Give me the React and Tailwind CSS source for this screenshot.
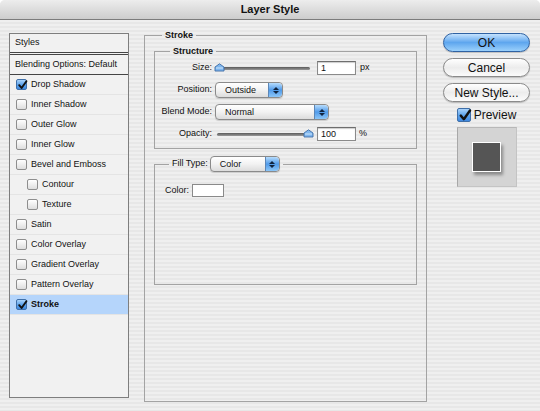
import React from "react";

const stripes =
  "bg-[repeating-linear-gradient(180deg,#efefef_0px,#efefef_2px,#e7e7e7_2px,#e7e7e7_4px)]";

const CheckMark = ({ size = 11 }) => (
  <svg width={size} height={size} viewBox="0 0 11 11" className="absolute inset-0">
    <path d="M2.2 5.2 L4.6 8 L9.4 1.2" fill="none" stroke="#111" strokeWidth="1.9" strokeLinecap="round" strokeLinejoin="round" />
  </svg>
);

const Check = ({ checked, big }) => (
  <span
    className={`relative inline-block shrink-0 rounded-[2px] border ${
      big ? "w-[14px] h-[14px]" : "w-[11px] h-[11px]"
    } ${
      checked
        ? "border-[#3f6fa8] bg-gradient-to-b from-[#a9d3fb] via-[#5fa5ec] to-[#3f88df]"
        : "border-[#8e8e8e] bg-gradient-to-b from-[#ffffff] to-[#dedede]"
    }`}
  >
    {checked && <CheckMark size={big ? 14 : 11} />}
  </span>
);

const Thumb = () => (
  <svg width="11" height="9" viewBox="0 0 11 9">
    <path d="M1 4 L5.5 0.8 L10 4 L10 8 L1 8 Z" fill="#7fb6ee" stroke="#3f6ea6" strokeWidth="0.9" />
    <path d="M2 5 L9 5" stroke="#cfe6fb" strokeWidth="1" />
  </svg>
);

const Slider = ({ at }) => (
  <div className="relative w-[95px] h-[10px] flex items-center">
    <div className="w-full h-[3px] rounded-full bg-gradient-to-b from-[#5a5a5a] to-[#9a9a9a]" />
    <div className={`absolute top-[0px] ${at === "left" ? "left-[-1px]" : "right-[-2px]"}`}>
      <Thumb />
    </div>
  </div>
);

const Stepper = () => (
  <div className="w-[14px] h-full rounded-r-[4px] bg-gradient-to-b from-[#b6dcfc] via-[#4f9ae9] to-[#8cc6f7] border-l border-[#5b86b7] flex flex-col items-center justify-center gap-[1px]">
    <svg width="6" height="3" viewBox="0 0 6 3"><path d="M0 3 L3 0 L6 3 Z" fill="#10243f" /></svg>
    <svg width="6" height="3" viewBox="0 0 6 3"><path d="M0 0 L3 3 L6 0 Z" fill="#10243f" /></svg>
  </div>
);

const Select = ({ value, w }) => (
  <div
    className={`${w} h-[16px] flex items-stretch rounded-[4px] border border-[#8a8a8a] bg-gradient-to-b from-[#ffffff] via-[#f2f2f2] to-[#dcdcdc] shadow-[0_1px_1px_rgba(0,0,0,0.15)]`}
  >
    <span className="flex-1 pl-[9px] leading-[14px] text-[9px]">{value}</span>
    <Stepper />
  </div>
);

const Field = ({ value }) => (
  <div className="w-[39px] h-[14px] bg-white border border-[#8a8a8a] border-t-[#6e6e6e] shadow-[inset_0_1px_1px_rgba(0,0,0,0.2)] pl-[3px] leading-[12px] text-[9px]">
    {value}
  </div>
);

const styles = [
  { name: "Drop Shadow", checked: true },
  { name: "Inner Shadow" },
  { name: "Outer Glow" },
  { name: "Inner Glow" },
  { name: "Bevel and Emboss" },
  { name: "Contour", indent: true },
  { name: "Texture", indent: true },
  { name: "Satin" },
  { name: "Color Overlay" },
  { name: "Gradient Overlay" },
  { name: "Pattern Overlay" },
  { name: "Stroke", checked: true, selected: true },
];

const Row = ({ label, children }) => (
  <div className="flex items-center h-[22px]">
    <span className="w-[57px] text-right text-[9px]">{label}</span>
    <div className="ml-[3px] flex items-center">{children}</div>
  </div>
);

const Button = ({ children, primary }) => (
  <div
    className={`w-[87px] h-[19px] rounded-full border flex items-center justify-center text-[12px] leading-none ${
      primary
        ? "border-[#2f62a3] bg-gradient-to-b from-[#c4e2fd] via-[#5ea6ee] to-[#9ad0fb]"
        : "border-[#8a8a8a] bg-gradient-to-b from-[#ffffff] via-[#ececec] to-[#fbfbfb]"
    } shadow-[0_1px_1px_rgba(0,0,0,0.2)]`}
  >
    {children}
  </div>
);

export default function App() {
  return (
    <div className="w-[540px] h-[411px] bg-white font-['Liberation_Sans',Arial,sans-serif] text-[#111]">
      <div className={`w-full h-full rounded-t-[5px] overflow-hidden flex flex-col ${stripes}`}>
        {/* Title bar */}
        <div className="h-[20px] shrink-0 flex items-center justify-center border-b border-[#7c7c7c] bg-gradient-to-b from-[#ededed] to-[#cdcdcd] text-[11px] font-bold">
          Layer Style
        </div>

        <div className="flex flex-1">
          {/* Styles list */}
          <div className="ml-[9px] mt-[13px] w-[120px] h-[365px] border border-[#7e7e7e] bg-[#f1f1f1] text-[9px] flex flex-col">
            <div className="h-[21px] border-b-[3px] border-double border-[#444] pl-[5px] flex items-center">Styles</div>
            <div className="h-[20px] border-b border-[#444] pl-[5px] flex items-center">Blending Options: Default</div>
            {styles.map((s) => (
              <div
                key={s.name}
                className={`h-[20px] flex items-center gap-[4px] border-b border-[#e4e4e4] ${
                  s.indent ? "pl-[17px]" : "pl-[6px]"
                } ${s.selected ? "bg-[#b5d5fb] font-bold border-[#d4e6fb]" : ""}`}
              >
                <Check checked={s.checked} />
                <span>{s.name}</span>
              </div>
            ))}
          </div>

          {/* Stroke group */}
          <fieldset className="ml-[15px] mt-[10px] w-[283px] h-[372px] border border-[#a3a3a3] px-[9px] pb-0">
            <legend className="ml-[8px] px-[3px] text-[9px] font-bold leading-[11px]">Stroke</legend>

            <fieldset className="mt-[5px] border border-[#a3a3a3] pl-0 pr-0 pb-[3px]">
              <legend className="ml-[15px] px-[3px] text-[9px] font-bold leading-[11px]">Structure</legend>
              <Row label="Size:">
                <Slider at="left" />
                <div className="ml-[7px]"><Field value="1" /></div>
                <span className="ml-[4px] text-[9px]">px</span>
              </Row>
              <Row label="Position:">
                <Select value="Outside" w="w-[68px]" />
              </Row>
              <Row label="Blend Mode:">
                <Select value="Normal" w="w-[114px]" />
              </Row>
              <Row label="Opacity:">
                <div className="ml-[2px]"><Slider at="right" /></div>
                <div className="ml-[5px]"><Field value="100" /></div>
                <span className="ml-[3px] text-[9px]">%</span>
              </Row>
            </fieldset>

            <fieldset className="mt-[7px] h-[129px] border border-[#a3a3a3] pl-[10px]">
              <legend className="ml-[4px] px-[3px] flex items-center gap-[2px] text-[9px]">
                <span>Fill Type:</span>
                <Select value="Color" w="w-[70px]" />
              </legend>
              <div className="mt-[12px] flex items-center gap-[3px] text-[9px]">
                <span>Color:</span>
                <div className="w-[32px] h-[13px] bg-white border border-[#8a8a8a]" />
              </div>
            </fieldset>
          </fieldset>

          {/* Buttons */}
          <div className="ml-[16px] mt-[13px] w-[87px] flex flex-col items-center gap-[6px]">
            <Button primary>OK</Button>
            <Button>Cancel</Button>
            <Button>New Style...</Button>
            <div className="flex items-center gap-[3px] text-[12px] h-[14px]">
              <Check checked big />
              <span>Preview</span>
            </div>
            <div className="mt-[-1px] w-[60px] h-[60px] bg-[#d4d4d4] border border-[#c4c4c4] border-l-[#a8a8a8] border-t-[#b8b8b8] flex items-center justify-center">
              <div className="w-[29px] h-[30px] bg-[#555] border border-white shadow-[2px_3px_3px_rgba(0,0,0,0.35)]" />
            </div>
          </div>
        </div>
      </div>
    </div>
  );
}
